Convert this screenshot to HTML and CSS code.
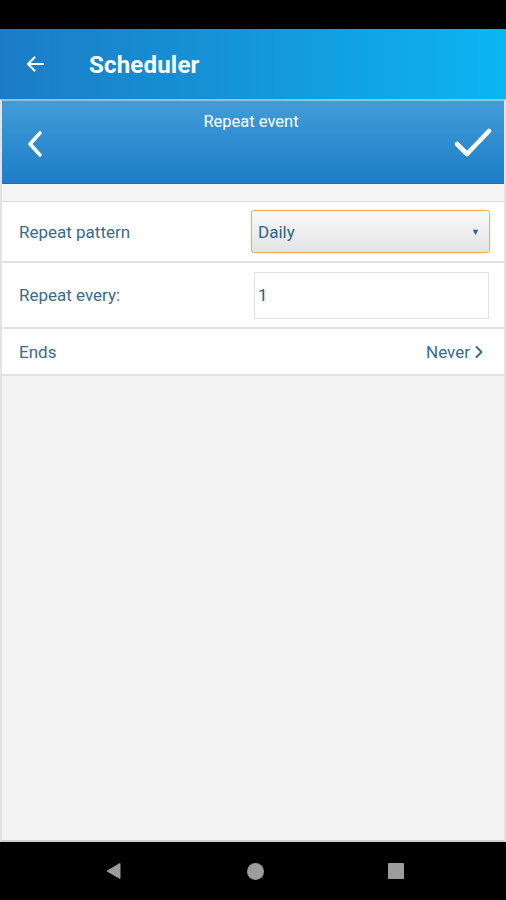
FILE: index.html
```html
<!DOCTYPE html>
<html>
<head>
<meta charset="utf-8">
<link rel="stylesheet" href="styles.css">
</head>
<body>
<div class="screen">
  <div class="status"></div>
  <header class="appbar">
    <svg class="appbar-back" width="24" height="24" viewBox="0 0 24 24"><path d="M20 12H5M11.5 5.5L5 12l6.5 6.5" fill="none" stroke="#fff" stroke-width="2.2" stroke-linecap="round" stroke-linejoin="round"/></svg>
    <span class="appbar-title">Scheduler</span>
  </header>
  <main class="frame">
    <div class="subheader">
      <svg class="sub-back" width="20" height="28" viewBox="0 0 20 28"><path d="M15 3L5 14l10 11" fill="none" stroke="#fff" stroke-width="3.6" stroke-linecap="round" stroke-linejoin="round"/></svg>
      <div class="sub-title">Repeat event</div>
      <svg class="sub-check" width="40" height="32" viewBox="0 0 40 32"><path d="M4 17l10 10L36 4" fill="none" stroke="#fff" stroke-width="4.6" stroke-linecap="round" stroke-linejoin="round"/></svg>
    </div>
    <div class="spacer"></div>
    <div class="row row-pattern">
      <span class="label">Repeat pattern</span>
      <div class="select"><span>Daily</span><span class="caret">▼</span></div>
    </div>
    <div class="row row-every">
      <span class="label">Repeat every:</span>
      <div class="input">1</div>
    </div>
    <div class="row row-ends">
      <span class="label">Ends</span>
      <span class="value">Never <svg width="10" height="14" viewBox="0 0 10 14"><path d="M2.5 2l5 5-5 5" fill="none" stroke="#3b6a8c" stroke-width="2" stroke-linecap="round" stroke-linejoin="round"/></svg></span>
    </div>
    <div class="fill"></div>
  </main>
  <footer class="navbar">
    <svg width="18" height="18" viewBox="0 0 18 18"><path d="M15 1.5v15L2 9z" fill="#9c9c9c" stroke="#9c9c9c" stroke-width="1" stroke-linejoin="round"/></svg>
    <span class="nav-circle"></span>
    <span class="nav-square"></span>
  </footer>
</div>
</body>
</html>
```

FILE: styles.css
```css
* { box-sizing: border-box; }
html, body { margin: 0; padding: 0; }
body {
  font-family: Roboto, "Liberation Sans", sans-serif;
  background: #000;
}
.screen {
  width: 506px;
  height: 900px;
  display: flex;
  flex-direction: column;
}
.status { height: 29px; background: #000; }
.appbar {
  height: 70px;
  background: linear-gradient(90deg, #1b7cc6 0%, #1496da 50%, #0bb6f0 100%);
  display: flex;
  align-items: center;
  padding-left: 23px;
}
.appbar-back { margin-right: 42px; }
.appbar-title {
  color: #fff;
  font-size: 24px;
  font-weight: 700;
  letter-spacing: 0.2px;
  margin-top: 1px;
}
.frame {
  height: 743px;
  display: flex;
  flex-direction: column;
  background: #f3f3f3;
  border-top: 2px solid #8cc3e6;
  border-left: 2px solid #e3e3e3;
  border-right: 2px solid #e3e3e3;
  border-bottom: 2px solid #cfcfcf;
}
.subheader {
  height: 83px;
  background: linear-gradient(180deg, #439cd7 0%, #2f8dd0 50%, #1d7ec6 100%);
  display: flex;
  align-items: flex-start;
  justify-content: space-between;
  padding: 0 11px 0 23px;
  border-bottom: 1px solid #1b72b6;
}
.sub-back { margin-top: 29px; }
.sub-check { margin-top: 26px; }
.sub-title {
  color: #fff;
  font-size: 16.5px;
  margin-top: 11px;
  padding-left: 4px;
}
.spacer {
  height: 18px;
  background: #f5f5f5;
  border-bottom: 1px solid #dedede;
}
.row {
  background: #fff;
  display: flex;
  align-items: center;
  justify-content: space-between;
  padding-left: 17px;
  border-bottom: 2px solid #e2e2e2;
  color: #3b6a8c;
  font-size: 17px;
}
.row-pattern { height: 61px; padding-right: 14px; }
.row-every { height: 66px; padding-right: 15px; }
.row-ends { height: 47px; padding-right: 20px; padding-top: 1px; }
.select {
  width: 239px;
  height: 43px;
  border: 1.5px solid #f2ad5c;
  border-radius: 3px;
  background: linear-gradient(180deg, #f9f9f9 0%, #ececec 60%, #e3e3e3 100%);
  box-shadow: 0 0 2px rgba(240, 170, 90, 0.5);
  display: flex;
  align-items: center;
  justify-content: space-between;
  padding: 0 9px 0 6px;
  color: #2f6185;
  font-size: 17px;
}
.caret { font-size: 9px; color: #2f6185; }
.input {
  width: 235px;
  height: 47px;
  border: 1px solid #e2e2e2;
  display: flex;
  align-items: center;
  padding-left: 3px;
  color: #2f6185;
  font-size: 17px;
}
.value {
  display: flex;
  align-items: center;
  gap: 4px;
}
.fill { flex: 1; background: #f3f3f3; }
.navbar {
  flex: 1;
  background: #000;
  display: flex;
  align-items: center;
  justify-content: center;
  gap: 124px;
  padding-left: 2px;
}
.nav-circle {
  width: 17px;
  height: 17px;
  border-radius: 50%;
  background: #9c9c9c;
}
.nav-square {
  width: 16px;
  height: 16px;
  background: #9c9c9c;
  border-radius: 1px;
}
```
